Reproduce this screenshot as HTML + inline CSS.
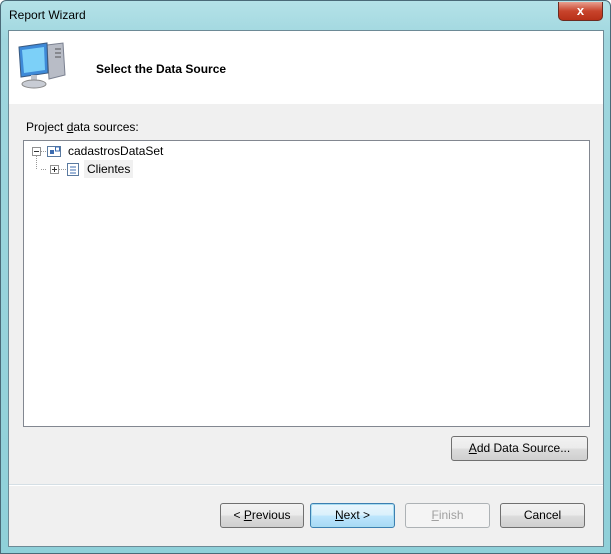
<!DOCTYPE html>
<html><head><style>
body{margin:0;width:611px;height:554px;overflow:hidden;font-family:"Liberation Sans",sans-serif;font-size:12px;}
.frame{position:absolute;left:0;top:0;width:609px;height:552px;border:1px solid #4a6a78;border-radius:6px 6px 0 0;background:linear-gradient(180deg,#b4e2e8 0,#9fd6de 40px,#8fd0d9 100%);}
.title{position:absolute;left:8px;top:7px;font-size:12px;color:#000;}
.close{position:absolute;left:557px;top:1px;width:43px;height:18px;border:1px solid #6b2a20;border-top:none;border-radius:0 0 5px 5px;background:linear-gradient(#e8a090,#c8442c 50%,#b83018);color:#fff;font-weight:bold;text-align:center;line-height:17px;font-size:13px;}
.client{position:absolute;left:8px;top:30px;width:594px;height:515px;background:#f0f0f0;border:1px solid #6d8a96;}
.header{position:absolute;left:0;top:0;width:594px;height:73px;background:#fff;}
.h{position:absolute;left:87px;top:31px;font-weight:bold;font-size:12px;}
.lbl{position:absolute;left:17px;top:89px;}
.tree{position:absolute;left:14px;top:109px;width:565px;height:285px;background:#fff;border:1px solid #828790;}
.sep{position:absolute;left:0;top:453px;width:594px;height:1px;background:#d5dfe5;border-bottom:1px solid #fff;}
.btn{position:absolute;height:23px;border:1px solid #707070;border-radius:3px;background:linear-gradient(#f2f2f2 0,#ebebeb 50%,#dddddd 50%,#cfcfcf 100%);text-align:center;line-height:23px;font-size:12px;}
.dis{border-color:#adb2b5;background:#f4f4f4;color:#a0a0a0;}
.def{border-color:#3c7fb1;box-shadow:inset 0 0 0 1px #a8dcf0;background:linear-gradient(#eaf6fd,#d9f0fc 50%,#bee6fd 50%,#a7d9f5);}
u{text-decoration:underline;}
</style></head><body>
<div class="frame">
<div class="title">Report Wizard</div>
<div class="close">x</div>
</div>
<div class="client">
<div class="header">
<svg style="position:absolute;left:8px;top:8px" width="52" height="50" viewBox="0 0 52 50">
<path d="M30 6 L46 4 L48 36 L32 40 Z" fill="#b8bcc6" stroke="#7a8090"/>
<path d="M38 10h6M38 14h6M38 18h6" stroke="#555"/>
<path d="M2 8 L30 4 L31 34 L4 38 Z" fill="#3e8ad8" stroke="#3a5a80"/>
<path d="M5 11 L27 8 L28 31 L7 34 Z" fill="#7cd0f8"/>
<path d="M14 36 L20 36 L20 42 L14 42 Z" fill="#c0c4cc"/>
<ellipse cx="17" cy="45" rx="12" ry="4" fill="#c8ccd4" stroke="#888"/>
</svg>
<div class="h">Select the Data Source</div>
</div>
<div class="lbl">Project <u>d</u>ata sources:</div>
<div class="tree">
<svg style="position:absolute;left:0;top:0" width="120" height="40">
<rect x="8.5" y="6.5" width="8" height="8" fill="#fff" stroke="#919191"/><path d="M10 10.5h5" stroke="#333"/>
<path d="M17 10.5h5M12.5 15v13M17 28.5h5" stroke="#999" stroke-dasharray="1 1"/>
<rect x="23.5" y="5.5" width="13" height="10" fill="#fff" stroke="#5a7aa0"/><rect x="26" y="9" width="4" height="4" fill="#3c6cb0"/><rect x="31.5" y="6" width="4" height="4" fill="#fff" stroke="#3c6cb0"/>
<rect x="26.5" y="24.5" width="8" height="8" fill="#fff" stroke="#919191"/><path d="M28 28.5h5M30.5 26v5" stroke="#333"/>
<path d="M35 28.5h7" stroke="#999" stroke-dasharray="1 1"/>
<rect x="43.5" y="22.5" width="11" height="12" fill="#fff" stroke="#5a7aa0"/><path d="M46 26h6M46 29h6M46 32h6" stroke="#3c6cb0"/>
</svg>
<div style="position:absolute;left:44px;top:3px">cadastrosDataSet</div>
<div style="position:absolute;left:60px;top:19px;padding:2px 3px;background:#f0f0f0">Clientes</div>
</div>
<div class="btn" style="left:442px;top:405px;width:135px"><u>A</u>dd Data Source...</div>
<div class="sep"></div>
<div class="btn" style="left:211px;top:472px;width:82px">&lt; <u>P</u>revious</div>
<div class="btn def" style="left:301px;top:472px;width:83px"><u>N</u>ext &gt;</div>
<div class="btn dis" style="left:396px;top:472px;width:83px"><u>F</u>inish</div>
<div class="btn" style="left:491px;top:472px;width:83px">Cancel</div>
</div>
</body></html>
